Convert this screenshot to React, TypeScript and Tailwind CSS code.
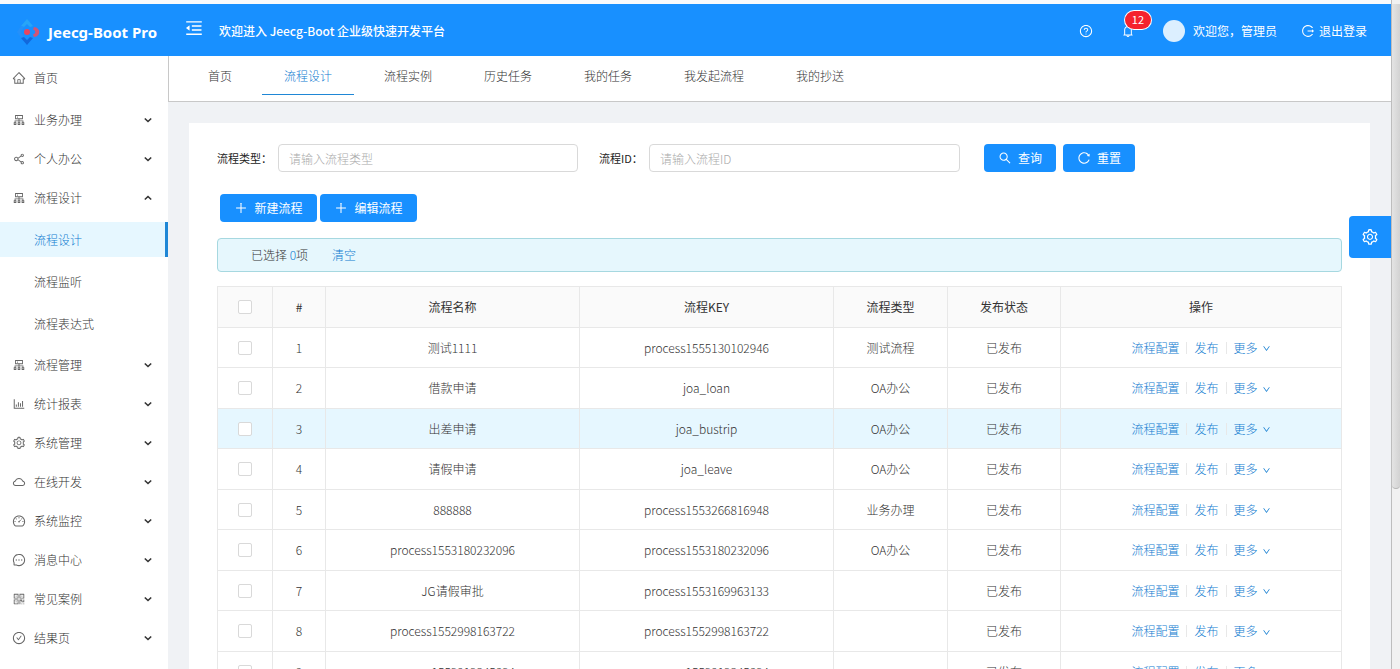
import React, { useState } from "react";
import {
  AiOutlineBarChart,
  AiOutlineBell,
  AiOutlineCheckCircle,
  AiOutlineCloud,
  AiOutlineCluster,
  AiOutlineDashboard,
  AiOutlineDown,
  AiOutlineHome,
  AiOutlineLogout,
  AiOutlineMenuFold,
  AiOutlineMessage,
  AiOutlinePlus,
  AiOutlineQrcode,
  AiOutlineQuestionCircle,
  AiOutlineReload,
  AiOutlineSearch,
  AiOutlineSetting,
  AiOutlineShareAlt,
} from "react-icons/ai";
import type { IconType } from "react-icons";

interface MenuItem {
  label: string;
  icon: IconType;
  children?: string[];
}

interface ProcessRow {
  id: number;
  name: string;
  key: string;
  type: string;
}

const MENU: MenuItem[] = [
  { label: "业务办理", icon: AiOutlineCluster },
  { label: "个人办公", icon: AiOutlineShareAlt },
  { label: "流程设计", icon: AiOutlineCluster, children: ["流程设计", "流程监听", "流程表达式"] },
  { label: "流程管理", icon: AiOutlineCluster },
  { label: "统计报表", icon: AiOutlineBarChart },
  { label: "系统管理", icon: AiOutlineSetting },
  { label: "在线开发", icon: AiOutlineCloud },
  { label: "系统监控", icon: AiOutlineDashboard },
  { label: "消息中心", icon: AiOutlineMessage },
  { label: "常见案例", icon: AiOutlineQrcode },
  { label: "结果页", icon: AiOutlineCheckCircle },
];

const TABS = ["首页", "流程设计", "流程实例", "历史任务", "我的任务", "我发起流程", "我的抄送"];

const ROWS: ProcessRow[] = [
  { id: 1, name: "测试1111", key: "process1555130102946", type: "测试流程" },
  { id: 2, name: "借款申请", key: "joa_loan", type: "OA办公" },
  { id: 3, name: "出差申请", key: "joa_bustrip", type: "OA办公" },
  { id: 4, name: "请假申请", key: "joa_leave", type: "OA办公" },
  { id: 5, name: "888888", key: "process1553266816948", type: "业务办理" },
  { id: 6, name: "process1553180232096", key: "process1553180232096", type: "OA办公" },
  { id: 7, name: "JG请假审批", key: "process1553169963133", type: "" },
  { id: 8, name: "process1552998163722", key: "process1552998163722", type: "" },
  { id: 9, name: "process1552912345824", key: "process1552912345824", type: "" },
];

const Logo = () => (
  <svg className="h-7 w-6" viewBox="0 0 24 28" fill="none">
    <path d="M5 8 11 1l6 7-3 1-3-3-3 3z" fill="#27a5f8" />
    <path d="m5 8 3 1-3 5 3 5-3 1-4-6z" fill="#2490fa" />
    <path d="m5 20 6 7 6-7-3-1-3 3-3-3z" fill="#1268dc" />
    <circle cx="11" cy="14" r="3" fill="#ea4560" />
    <path d="M18 9c7 .5 7 9.500 0 10l-1-2.500c3-1 3-4 0-5z" fill="#cf5578" />
  </svg>
);

const Header = () => (
  <header className="flex h-[52px] shrink-0 items-center bg-[#1890ff] pt-0.5 text-white">
    <div className="flex w-[168px] shrink-0 items-center gap-2 pt-0.5 pl-4">
      <Logo />
      <h1 className="font-['Noto_Sans',sans-serif] text-[15px] font-bold whitespace-nowrap">
        Jeecg-Boot Pro
      </h1>
    </div>
    <button aria-label="收起菜单" className="ml-4 pb-1.5 text-xl">
      <AiOutlineMenuFold />
    </button>
    <p className="ml-[15px] flex-1 font-medium">欢迎进入 Jeecg-Boot 企业级快速开发平台</p>
    <button aria-label="帮助" className="text-sm">
      <AiOutlineQuestionCircle />
    </button>
    <button aria-label="通知" className="relative ml-7 text-sm">
      <AiOutlineBell />
      <span className="absolute -top-[13px] left-1 flex h-[18px] w-[26px] items-center justify-center rounded-full bg-[#f5222d] text-[11px] ring-1 ring-white">
        12
      </span>
    </button>
    <a href="#user" className="ml-7 flex items-center gap-2">
      <span className="h-[22px] w-[22px] rounded-full bg-[#dcefff]" />
      <span>欢迎您，管理员</span>
    </a>
    <button className="mr-6 ml-6 flex items-center gap-1">
      <AiOutlineLogout className="text-sm" />
      退出登录
    </button>
  </header>
);

const Sidebar = () => {
  const [open, setOpen] = useState<string | null>("流程设计");
  const [active, setActive] = useState("流程设计");

  return (
    <nav className="w-[168px] shrink-0 bg-white pt-1 font-light text-[#333]">
      <a href="#home" className="flex h-[35px] items-center gap-2 pl-3">
        <AiOutlineHome className="text-sm text-[#666]" />
        首页
      </a>
      <ul className="mt-[7px] flex flex-col gap-1">
        {MENU.map(({ label, icon: Icon, children }) => (
          <li key={label} className={children && open === label ? "mb-0.5" : ""}>
            <button
              onClick={() => setOpen(open === label ? null : label)}
              className="flex h-[35px] w-full items-center gap-2 pr-4 pl-3"
            >
              <Icon className="text-sm text-[#666]" />
              <span className="flex-1 text-left">{label}</span>
              <svg
                className={`h-2 w-2 ${children && open === label ? "rotate-180" : ""}`}
                viewBox="0 0 8 8"
                fill="none"
                stroke="currentColor"
                strokeWidth="1.6"
              >
                <path d="m.8 2.500 3.200 3 3.200-3" />
              </svg>
            </button>
            {children && open === label && (
              <ul className="mt-[7px] flex flex-col gap-[7px]">
                {children.map((child) => (
                  <li key={child}>
                    <a
                      href="#menu"
                      onClick={() => setActive(child)}
                      className={`flex h-[35px] items-center pl-[34px] ${
                        active === child ? "border-r-3 border-[#1f87d6] bg-[#e6f7ff] text-[#0f7bd0]" : ""
                      }`}
                    >
                      {child}
                    </a>
                  </li>
                ))}
              </ul>
            )}
          </li>
        ))}
      </ul>
    </nav>
  );
};

const Tabs = () => {
  const [current, setCurrent] = useState("流程设计");

  return (
    <div className="flex h-[46px] shrink-0 items-start gap-2 border-b border-l border-[#c8c8c8] bg-white pl-[17px] font-light text-[#333]">
      {TABS.map((tab) => (
        <button
          key={tab}
          onClick={() => setCurrent(tab)}
          className={`h-[39px] border-b px-[22px] pt-0.5 ${
            current === tab ? "border-[#1f87d6] text-[#0f7bd0]" : "border-transparent"
          }`}
        >
          {tab}
        </button>
      ))}
    </div>
  );
};

const SearchForm = () => (
  <form className="flex items-center" onSubmit={(e) => e.preventDefault()}>
    <label htmlFor="type" className="w-[61px] shrink-0 text-[11px] text-[#222]">
      流程类型：
    </label>
    <input
      id="type"
      placeholder="请输入流程类型"
      className="h-7 w-[300px] rounded border border-[#d9d9d9] px-2.5 outline-none placeholder:font-light placeholder:text-[#aaa]"
    />
    <label htmlFor="pid" className="ml-[21px] w-[50px] shrink-0 text-[11px] text-[#222]">
      流程ID：
    </label>
    <input
      id="pid"
      placeholder="请输入流程ID"
      className="h-7 w-[311px] rounded border border-[#d9d9d9] px-2.5 outline-none placeholder:font-light placeholder:text-[#aaa]"
    />
    <button type="submit" className="ml-6 flex h-7 w-[72px] items-center justify-center gap-1.5 rounded bg-[#1890ff] text-white">
      <AiOutlineSearch className="text-sm" />
      查询
    </button>
    <button type="reset" className="ml-[7px] flex h-7 w-[72px] items-center justify-center gap-1.5 rounded bg-[#1890ff] text-white">
      <AiOutlineReload className="text-sm" />
      重置
    </button>
  </form>
);

const ProcessTable = () => {
  const cell = "border border-[#e8e8e8]";
  const checkbox = "mx-auto block h-3.5 w-3.5 appearance-none rounded-xs border border-[#d9d9d9] bg-white";

  return (
    <table className="mt-3.5 w-full table-fixed border-collapse text-center font-light text-[#333]">
      <colgroup>
        <col className="w-[55px]" />
        <col className="w-[53px]" />
        <col className="w-[254px]" />
        <col className="w-[254px]" />
        <col className="w-[114px]" />
        <col className="w-[113px]" />
        <col className="w-[281px]" />
      </colgroup>
      <thead className="bg-[#fafafa]">
        <tr className="h-[41px]">
          <th className={cell}>
            <input type="checkbox" aria-label="全选" className={checkbox} />
          </th>
          {["#", "流程名称", "流程KEY", "流程类型", "发布状态", "操作"].map((title) => (
            <th key={title} className={`${cell} font-normal`}>
              {title}
            </th>
          ))}
        </tr>
      </thead>
      <tbody>
        {ROWS.map((row) => (
          <tr key={row.id} className={`odd:h-10 even:h-[41px] ${row.id === 3 ? "bg-[#e6f7ff]" : ""}`}>
            <td className={cell}>
              <input type="checkbox" aria-label={`选择第${row.id}行`} className={checkbox} />
            </td>
            <td className={cell}>{row.id}</td>
            <td className={cell}>{row.name}</td>
            <td className={cell}>{row.key}</td>
            <td className={cell}>{row.type}</td>
            <td className={cell}>已发布</td>
            <td className={cell}>
              <div className="flex items-center justify-center text-[#0f7bd0]">
                <a href="#config">流程配置</a>
                <span className="mx-[7px] h-3 w-px bg-[#e8e8e8]" />
                <a href="#publish">发布</a>
                <span className="mx-[7px] h-3 w-px bg-[#e8e8e8]" />
                <button className="flex items-center gap-1">
                  更多
                  <AiOutlineDown className="mt-0.5 text-[9px]" />
                </button>
              </div>
            </td>
          </tr>
        ))}
      </tbody>
    </table>
  );
};

export default function App() {
  return (
    <div className="flex h-screen overflow-hidden bg-[#f0f2f5] font-['Noto_Sans_CJK_SC',sans-serif] text-xs">
      <div className="relative flex min-w-0 flex-1 flex-col border-t-4 border-[#f8fafc]">
        <Header />
        <div className="flex min-h-0 flex-1">
          <Sidebar />
          <main className="flex min-w-0 flex-1 flex-col">
            <Tabs />
            <section className="mx-[21px] mt-[21px] shrink-0 bg-white px-7 pt-[21px] pb-7">
              <SearchForm />
              <div className="mt-[22px] ml-[3px] flex gap-[3px]">
                {["新建流程", "编辑流程"].map((text) => (
                  <button key={text} className="flex h-7 w-[97px] items-center justify-center gap-1.5 rounded bg-[#1890ff] text-white">
                    <AiOutlinePlus className="text-sm" />
                    {text}
                  </button>
                ))}
              </div>
              <div className="mt-4 flex h-[34px] items-center gap-6 rounded border border-[#a6d8e0] bg-[#e6f7fd] pl-[33px] font-light text-[#333]">
                <span>
                  已选择 <span className="text-[#0f7bd0]">0</span>项
                </span>
                <button className="text-[#0f7bd0]">清空</button>
              </div>
              <ProcessTable />
            </section>
          </main>
        </div>
        <button
          aria-label="设置"
          className="absolute top-[212px] right-0 flex h-[42px] w-[42px] items-center justify-center rounded-l bg-[#1890ff] text-lg text-white"
        >
          <AiOutlineSetting />
        </button>
      </div>
      <div className="w-[9px] shrink-0 border-l border-[#bdbdbd] bg-[#f1f1f1] pt-1">
        <div className="h-[73%] rounded-b border-b border-[#b5b5b5] bg-linear-to-r from-[#e4e4e4] to-[#d2d2d2]" />
      </div>
    </div>
  );
}
